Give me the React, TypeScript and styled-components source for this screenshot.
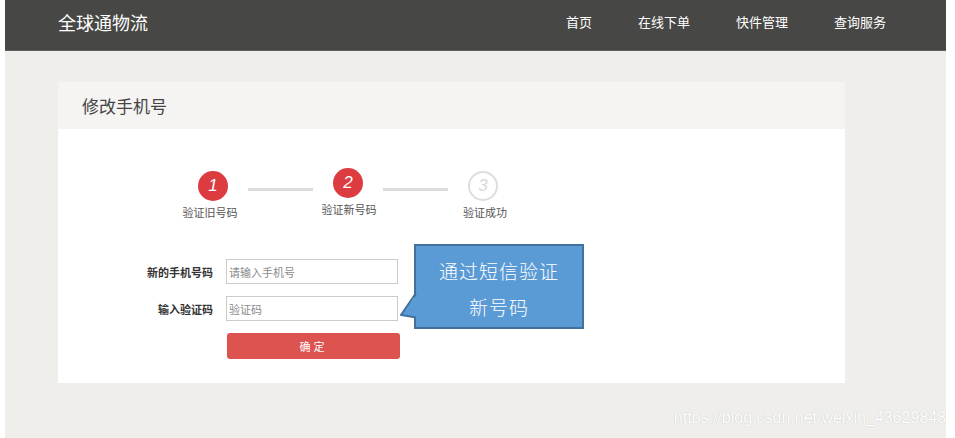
import React from "react";
import styled, { createGlobalStyle } from "styled-components";

const Global = createGlobalStyle`
  html, body { margin: 0; padding: 0; background: #ffffff; }
  body { font-family: "Noto Sans CJK SC", "Noto Sans", sans-serif; }
  * { box-sizing: border-box; }
`;

const Page = styled.div`
  margin-left: 5px;
  width: 941px;
  height: 438px;
  background: #efeeea;
  overflow: hidden;
`;

const Header = styled.header`
  height: 51px;
  background: #474745;
  border-bottom: 1px solid #5e5e5b;
  display: flex;
  align-items: center;
  padding: 0 60px 6px 53px;
`;

const Logo = styled.div`
  color: #ffffff;
  font-size: 18px;
  line-height: 22px;
  flex: 1;
`;

const Nav = styled.nav`
  display: flex;
  gap: 46px;
`;

const NavItem = styled.a`
  color: #ffffff;
  font-size: 13px;
  line-height: 18px;
  text-decoration: none;
`;

const Card = styled.section`
  margin: 31px 0 0 53px;
  width: 787px;
`;

const CardTitle = styled.div`
  height: 47px;
  background: #f5f4f2;
  padding-left: 24px;
  display: flex;
  align-items: center;
  font-size: 17px;
  color: #444444;
`;

const CardBody = styled.div`
  position: relative;
  background: #ffffff;
  padding: 39px 0 24px 0;
`;

const Stepper = styled.div`
  display: flex;
  align-items: flex-start;
  padding-left: 120px;
`;

const Step = styled.div<{ $raised?: boolean }>`
  width: 70px;
  margin-top: ${(p) => (p.$raised ? 0 : 3)}px;
  display: flex;
  flex-direction: column;
  align-items: center;
`;

const Circle = styled.div<{ $active?: boolean }>`
  width: 30px;
  height: 30px;
  border-radius: 50%;
  background: ${(p) => (p.$active ? "#dc3b40" : "#ffffff")};
  border: ${(p) => (p.$active ? "none" : "2px solid #dddddd")};
  color: ${(p) => (p.$active ? "#ffffff" : "#d8d8d8")};
  font-family: "Liberation Sans", Arial, sans-serif;
  font-style: italic;
  font-size: 17px;
  display: flex;
  align-items: center;
  justify-content: center;
`;

const StepLabel = styled.div<{ $shift?: number }>`
  margin-top: 4px;
  margin-left: ${(p) => p.$shift ?? 0}px;
  font-size: 11px;
  line-height: 14px;
  color: #555555;
  white-space: nowrap;
`;

const Connector = styled.div`
  width: 65px;
  height: 3px;
  margin-top: 20px;
  background: #dddddd;
`;

const Form = styled.div`
  margin-top: 40px;
  display: flex;
  flex-direction: column;
  gap: 12px;
`;

const Row = styled.div`
  display: flex;
  align-items: center;
`;

const Label = styled.label`
  width: 155px;
  margin-right: 13px;
  text-align: right;
  font-size: 11px;
  font-weight: bold;
  color: #333333;
`;

const Input = styled.input`
  width: 172px;
  height: 25px;
  border: 1px solid #cccccc;
  padding: 0 2px;
  font-family: "Noto Sans CJK SC", sans-serif;
  font-size: 11px;
  color: #333;
  outline: none;
  &::placeholder { color: #8a8a8a; }
`;

const Submit = styled.button`
  margin-left: 169px;
  width: 173px;
  height: 26px;
  border: none;
  border-radius: 3px;
  background: #dc5350;
  color: #ffffff;
  font-family: "Noto Sans CJK SC", sans-serif;
  font-size: 11px;
  letter-spacing: 3px;
  cursor: pointer;
`;

const Callout = styled.div`
  position: absolute;
  left: 356px;
  top: 115px;
  width: 170px;
  height: 85px;
  background: #5b9bd5;
  border: 2px solid #41719c;
  padding-top: 7px;
  color: #ffffff;
  font-size: 19px;
  font-weight: 300;
  line-height: 36px;
  text-align: center;
  letter-spacing: 1px;
`;

const Tail = styled.svg`
  position: absolute;
  left: -16px;
  top: 47px;
`;

const Watermark = styled.div`
  margin-top: 27px;
  text-align: right;
  font-family: "Liberation Sans", Arial, sans-serif;
  font-size: 16px;
  line-height: 16px;
  color: #ffffff;
  text-shadow: 0 0 1px #b8b8b8;
`;

const steps = [
  { n: 1, label: "验证旧号码", active: true, shift: -6 },
  { n: 2, label: "验证新号码", active: true, raised: true, shift: 2 },
  { n: 3, label: "验证成功", active: false, shift: 4 },
];

export default function App() {
  return (
    <>
      <Global />
      <Page>
        <Header>
          <Logo>全球通物流</Logo>
          <Nav>
            <NavItem>首页</NavItem>
            <NavItem>在线下单</NavItem>
            <NavItem>快件管理</NavItem>
            <NavItem>查询服务</NavItem>
          </Nav>
        </Header>
        <Card>
          <CardTitle>修改手机号</CardTitle>
          <CardBody>
            <Stepper>
              {steps.map((s, i) => (
                <React.Fragment key={s.n}>
                  {i > 0 && <Connector />}
                  <Step $raised={s.raised}>
                    <Circle $active={s.active}>{s.n}</Circle>
                    <StepLabel $shift={s.shift}>{s.label}</StepLabel>
                  </Step>
                </React.Fragment>
              ))}
            </Stepper>
            <Form>
              <Row>
                <Label>新的手机号码</Label>
                <Input placeholder="请输入手机号" />
              </Row>
              <Row>
                <Label>输入验证码</Label>
                <Input placeholder="验证码" />
              </Row>
              <Row>
                <Submit>确定</Submit>
              </Row>
            </Form>
            <Callout>
              <Tail width="18" height="27" viewBox="0 0 18 27">
                <polygon points="18,0 0.5,22 18,25" fill="#5b9bd5" />
                <polyline points="16,0 1,22 16,24.5" fill="none" stroke="#41719c" strokeWidth="2" />
              </Tail>
              通过短信验证
              <br />
              新号码
            </Callout>
          </CardBody>
        </Card>
        <Watermark>https://blog.csdn.net/weixin_43629848</Watermark>
      </Page>
    </>
  );
}
